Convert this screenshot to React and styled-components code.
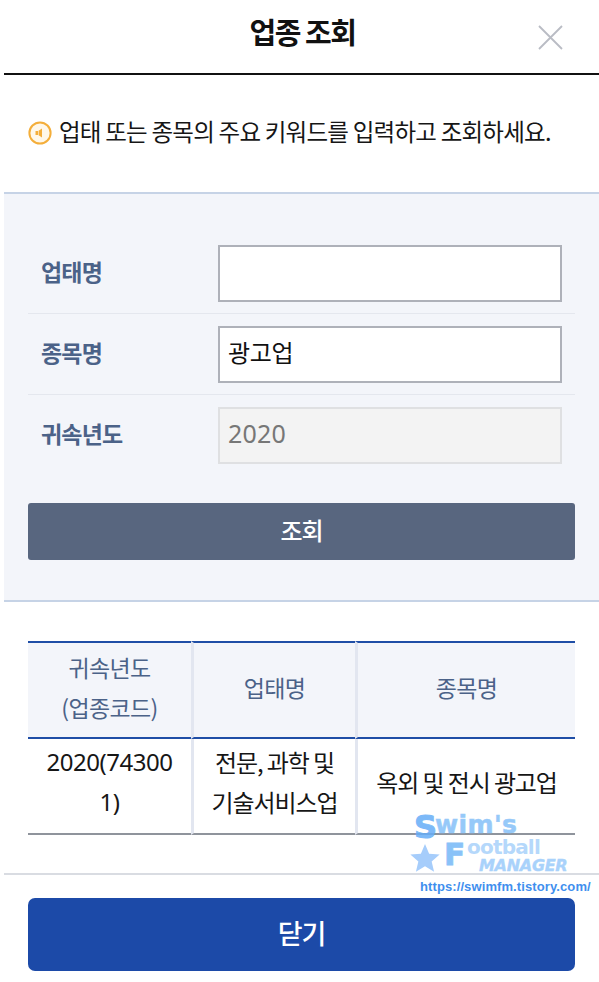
import styled, { createGlobalStyle } from "styled-components";

const Global = createGlobalStyle`
  html, body {
    margin: 0;
    padding: 0;
    background: #fff;
  }
  * {
    box-sizing: border-box;
  }
`;

const Page = styled.div`
  position: relative;
  width: 599px;
  height: 982px;
  overflow: hidden;
  padding-left: 4px;
  background: #fff;
  font-family: "Noto Sans CJK KR", "Noto Sans", sans-serif;
  color: #111;
`;

const Header = styled.header`
  position: relative;
  height: 75px;
  display: flex;
  align-items: center;
  justify-content: center;
  border-bottom: 2px solid #111;
  padding: 0 0 12px 2px;

  h1 {
    margin: 0;
    font-size: 29px;
    font-weight: 700;
    letter-spacing: -1.5px;
    line-height: 40px;
  }
`;

const CloseButton = styled.button`
  position: absolute;
  top: 25px;
  right: 36px;
  width: 25px;
  height: 25px;
  padding: 0;
  border: 0;
  background: none;
  display: flex;
`;

const Notice = styled.p`
  height: 117px;
  margin: 0;
  padding: 0 0 5px 24px;
  display: flex;
  align-items: center;
  gap: 7px;
  font-size: 23.5px;
  letter-spacing: -0.76px;
  font-weight: 400;
  color: #161616;
  white-space: nowrap;
`;

const NoticeIcon = styled.svg`
  flex: none;
  margin-top: 3px;
`;

const SearchPanel = styled.section`
  height: 410px;
  padding: 39px 24px 0;
  background: #f3f5fa;
  border-top: 2px solid #c6d3e6;
  border-bottom: 2px solid #c6d3e6;
`;

const FormRow = styled.div`
  height: 81px;
  padding: 12px 13px;
  display: flex;
  align-items: center;
  justify-content: space-between;
  border-bottom: 1.5px solid ${(p) => (p.$last ? "transparent" : "#e4e7ee")};
`;

const Label = styled.label`
  padding-bottom: 4px;
  font-size: 23px;
  font-weight: 700;
  letter-spacing: -0.8px;
  color: #4b6288;
`;

const Field = styled.div`
  width: 344px;
  height: 57px;
  padding: 0 8px ${(p) => (p.$disabled ? "4px" : "6px")};
  display: flex;
  align-items: center;
  font-size: ${(p) => (p.$disabled ? "25px" : "24px")};
  letter-spacing: ${(p) => (p.$disabled ? "0.2px" : "-0.3px")};
  background: ${(p) => (p.$disabled ? "#f3f3f3" : "#fff")};
  color: ${(p) => (p.$disabled ? "#777" : "#111")};
  border: 2px solid ${(p) => (p.$disabled ? "#dfe0e2" : "#aeb1b9")};
  font-family: ${(p) => (p.$disabled ? '"Noto Sans", sans-serif' : "inherit")};
`;

const SearchButton = styled.button`
  width: 100%;
  height: 57px;
  margin-top: 27px;
  padding: 0 0 5px;
  border: 0;
  border-radius: 3px;
  background: #58667f;
  color: #fff;
  font-family: inherit;
  font-size: 24px;
  font-weight: 500;
  letter-spacing: -1px;
`;

const TableWrap = styled.div`
  padding: 39px 24px 0;
`;

const Table = styled.table`
  width: 547px;
  table-layout: fixed;
  border-collapse: separate;
  border-spacing: 0;
  font-size: 23px;
  letter-spacing: -0.6px;
  line-height: 40px;
  text-align: center;

  th {
    height: 98px;
    padding: 0 0 7px;
    font-weight: 400;
    color: #4b6288;
    background: #f3f5fa;
    border-top: 2px solid #1f4ea6;
    border-bottom: 2px solid #1f4ea6;
  }

  td {
    height: 96px;
    padding: 0 0 8px;
    font-size: 24px;
    letter-spacing: -1.1px;
    color: #161616;
    border-bottom: 2px solid #8f949c;
  }

  th + th,
  td + td {
    border-left: 3px solid #e2e6f0;
  }
`;

const CodeCell = styled.td`
  && {
    font-size: 24px;
    letter-spacing: -0.5px;
    font-family: "Noto Sans", sans-serif;
  }
`;

const Footer = styled.footer`
  margin-top: 38px;
  height: 108px;
  padding: 23px 24px 0;
  border-top: 2px solid #d9dce2;
`;

const CloseAction = styled.button`
  width: 547px;
  height: 73px;
  padding: 0 0 4px;
  border: 0;
  border-radius: 7px;
  background: #1c4aa8;
  color: #fff;
  font-family: inherit;
  font-size: 27px;
  font-weight: 500;
  letter-spacing: -1px;
`;

// watermark laid over the table corner
const Watermark = styled.div`
  position: absolute;
  left: 408px;
  top: 812px;
  width: 190px;
  height: 84px;
  font-family: "DejaVu Sans", sans-serif;
  font-weight: 700;
  pointer-events: none;

  span {
    position: absolute;
    white-space: nowrap;
  }
`;

const MarkS = styled.span`
  left: 6px;
  top: -4px;
  font-size: 32px;
  color: #66adf7;
  opacity: 0.85;
  -webkit-text-stroke: 1px #66adf7;
`;

const MarkWim = styled.span`
  left: 27px;
  top: -2px;
  font-size: 25px;
  letter-spacing: 0.4px;
  color: #7dbcf8;
  opacity: 0.8;
  -webkit-text-stroke: 0.5px #7dbcf8;
`;

const MarkF = styled.span`
  left: 36px;
  top: 24px;
  font-size: 31px;
  color: #7dbcf8;
  opacity: 0.9;
  -webkit-text-stroke: 0.8px #7dbcf8;
`;

const MarkOotball = styled.span`
  left: 59px;
  top: 26px;
  font-size: 20px;
  line-height: 19px;
  letter-spacing: -0.8px;
  color: #b5d8fb;
`;

const MarkManager = styled.span`
  left: 71px;
  top: 46px;
  font-size: 16px;
  line-height: 16px;
  font-style: italic;
  letter-spacing: -0.3px;
  color: #a9d2fb;
  -webkit-text-stroke: 0.4px #a9d2fb;
`;

const MarkUrl = styled.span`
  left: 12px;
  top: 67px;
  font-family: "Liberation Sans", sans-serif;
  font-size: 13px;
  letter-spacing: 0.1px;
  color: #3f8fee;
`;

const MarkStar = styled.svg`
  position: absolute;
  left: 2px;
  top: 31px;
  width: 30px;
  height: 30px;
`;

function SpeakerIcon() {
  return (
    <NoticeIcon width="24" height="24" viewBox="0 0 24 24">
      <circle cx="12" cy="12" r="10.6" fill="#fff8ea" stroke="#f4ae3a" strokeWidth="2" />
      <path d="M7.500 10h2.500v4H7.500z M10.600 9.800l3.400-2.300v9l-3.400-2.300z" fill="#f4ae3a" />
    </NoticeIcon>
  );
}

export default function App() {
  return (
    <Page>
      <Global />
      <Header>
        <h1>업종 조회</h1>
        <CloseButton aria-label="닫기">
          <svg width="25" height="25" viewBox="0 0 25 25">
            <path d="M1 1L24 24M24 1L1 24" stroke="#b9bcc4" strokeWidth="1.8" fill="none" />
          </svg>
        </CloseButton>
      </Header>

      <Notice>
        <SpeakerIcon />
        업태 또는 종목의 주요 키워드를 입력하고 조회하세요.
      </Notice>

      <SearchPanel>
        <FormRow>
          <Label>업태명</Label>
          <Field />
        </FormRow>
        <FormRow>
          <Label>종목명</Label>
          <Field>광고업</Field>
        </FormRow>
        <FormRow $last>
          <Label>귀속년도</Label>
          <Field $disabled>2020</Field>
        </FormRow>
        <SearchButton>조회</SearchButton>
      </SearchPanel>

      <TableWrap>
        <Table>
          <colgroup>
            <col style={{ width: 163 }} />
            <col style={{ width: 164 }} />
            <col style={{ width: 220 }} />
          </colgroup>
          <thead>
            <tr>
              <th>
                귀속년도
                <br />
                (업종코드)
              </th>
              <th>업태명</th>
              <th>종목명</th>
            </tr>
          </thead>
          <tbody>
            <tr>
              <CodeCell>
                2020(74300
                <br />
                1)
              </CodeCell>
              <td>
                전문, 과학 및
                <br />
                기술서비스업
              </td>
              <td>옥외 및 전시 광고업</td>
            </tr>
          </tbody>
        </Table>
      </TableWrap>

      <Footer>
        <CloseAction>닫기</CloseAction>
      </Footer>

      <Watermark>
        <MarkStar viewBox="0 0 32 32">
          <path d="M16 1l4.400 10.400 11.200.9-8.500 7.300 2.600 11L16 24.700 6.300 30.600l2.600-11L.4 12.300l11.200-.9z" fill="#a6cdfb" />
        </MarkStar>
        <MarkS>S</MarkS>
        <MarkWim>wim's</MarkWim>
        <MarkF>F</MarkF>
        <MarkOotball>ootball</MarkOotball>
        <MarkManager>MANAGER</MarkManager>
        <MarkUrl>https://swimfm.tistory.com/</MarkUrl>
      </Watermark>
    </Page>
  );
}
